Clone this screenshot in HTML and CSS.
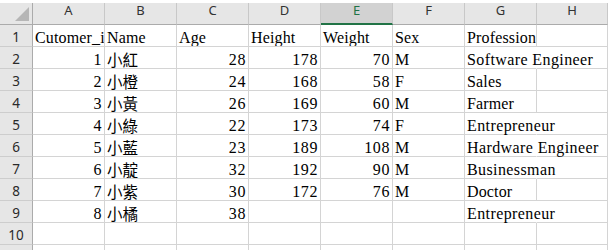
FILE: index.html
```html
<!DOCTYPE html>
<html>
<head>
<meta charset="utf-8">
<link rel="stylesheet" href="styles.css">
</head>
<body>
<div class="sheet">
  <div class="corner"><svg width="32" height="21" viewBox="0 0 32 21"><polygon points="15,18 29,18 29,4" fill="#b6b6b6"/></svg></div>
  <div class="ch">A</div><div class="ch">B</div><div class="ch">C</div><div class="ch">D</div><div class="ch sel">E</div><div class="ch">F</div><div class="ch">G</div><div class="ch">H</div>

  <div class="rh">1</div>
  <div class="c">Cutomer_id</div><div class="c">Name</div><div class="c">Age</div><div class="c">Height</div><div class="c">Weight</div><div class="c">Sex</div><div class="c">Profession</div><div class="c"></div>

  <div class="rh">2</div>
  <div class="c n">1</div><div class="c"><span class="cjk">小紅</span></div><div class="c n">28</div><div class="c n">178</div><div class="c n">70</div><div class="c">M</div><div class="c ov">Software Engineer</div><div class="c"></div>

  <div class="rh">3</div>
  <div class="c n">2</div><div class="c"><span class="cjk">小橙</span></div><div class="c n">24</div><div class="c n">168</div><div class="c n">58</div><div class="c">F</div><div class="c">Sales</div><div class="c"></div>

  <div class="rh">4</div>
  <div class="c n">3</div><div class="c"><span class="cjk">小黃</span></div><div class="c n">26</div><div class="c n">169</div><div class="c n">60</div><div class="c">M</div><div class="c">Farmer</div><div class="c"></div>

  <div class="rh">5</div>
  <div class="c n">4</div><div class="c"><span class="cjk">小綠</span></div><div class="c n">22</div><div class="c n">173</div><div class="c n">74</div><div class="c">F</div><div class="c ov">Entrepreneur</div><div class="c"></div>

  <div class="rh">6</div>
  <div class="c n">5</div><div class="c"><span class="cjk">小藍</span></div><div class="c n">23</div><div class="c n">189</div><div class="c n">108</div><div class="c">M</div><div class="c ov">Hardware Engineer</div><div class="c"></div>

  <div class="rh">7</div>
  <div class="c n">6</div><div class="c"><span class="cjk">小靛</span></div><div class="c n">32</div><div class="c n">192</div><div class="c n">90</div><div class="c">M</div><div class="c ov">Businessman</div><div class="c"></div>

  <div class="rh">8</div>
  <div class="c n">7</div><div class="c"><span class="cjk">小紫</span></div><div class="c n">30</div><div class="c n">172</div><div class="c n">76</div><div class="c">M</div><div class="c">Doctor</div><div class="c"></div>

  <div class="rh">9</div>
  <div class="c n">8</div><div class="c"><span class="cjk">小橘</span></div><div class="c n">38</div><div class="c n"></div><div class="c n"></div><div class="c"></div><div class="c ov">Entrepreneur</div><div class="c"></div>

  <div class="rh">10</div>
  <div class="c"></div><div class="c"></div><div class="c"></div><div class="c"></div><div class="c"></div><div class="c"></div><div class="c"></div><div class="c"></div>

  <div class="rh"></div>
  <div class="c"></div><div class="c"></div><div class="c"></div><div class="c"></div><div class="c"></div><div class="c"></div><div class="c"></div><div class="c"></div>
</div>
</body>
</html>
```

FILE: styles.css
```css
html, body {
  margin: 0;
  padding: 0;
  background: #ffffff;
  overflow: hidden;
}

.sheet {
  display: grid;
  grid-template-columns: 33px repeat(7, 72px) 71px;
  grid-template-rows: 22px repeat(10, 22px) 8px;
  padding-top: 3px;
  width: 608px;
}

.sheet > div {
  box-sizing: border-box;
  min-width: 0;
}

.corner {
  background: #e6e6e6;
  border-right: 1px solid #ababab;
  border-bottom: 1px solid #ababab;
}

.corner svg {
  display: block;
}

.ch {
  background: #e6e6e6;
  border-right: 1px solid #c8c8c8;
  border-bottom: 1px solid #ababab;
  font-family: "Noto Sans", sans-serif;
  font-size: 13px;
  line-height: 15px;
  color: #333333;
  text-align: center;
}

.ch.sel {
  background: #d2d2d2;
  border-bottom: 2px solid #217346;
  color: #217346;
}

.rh {
  background: #e6e6e6;
  border-right: 1px solid #ababab;
  border-bottom: 1px solid #cdcdcd;
  font-family: "Noto Sans", sans-serif;
  font-size: 13.5px;
  line-height: 18px;
  padding-top: 3px;
  color: #2a2a2a;
  text-align: center;
}

.c {
  border-right: 1px solid #d4d4d4;
  border-bottom: 1px solid #d4d4d4;
  font-family: "Liberation Serif", "Noto Sans CJK TC", serif;
  font-size: 16px;
  letter-spacing: 0.15px;
  line-height: 17px;
  padding: 4px 1px 0 2px;
  color: #000000;
  white-space: nowrap;
  overflow: hidden;
}

.c .cjk {
  font-family: "Noto Sans CJK TC", sans-serif;
  font-size: 15.5px;
  letter-spacing: 0;
}

.c.n {
  text-align: right;
  letter-spacing: 0.6px;
  padding-right: 2px;
}

.c.ov {
  overflow: visible;
  border-right-color: transparent;
  position: relative;
  z-index: 1;
  letter-spacing: 0.4px;
}
```
